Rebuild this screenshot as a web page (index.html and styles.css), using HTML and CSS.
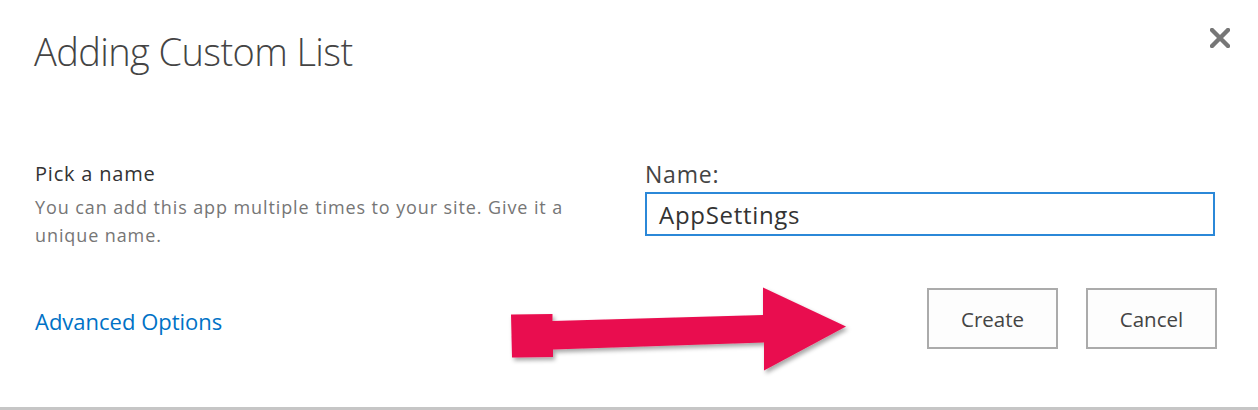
FILE: index.html
```html
<!DOCTYPE html>
<html>
<head>
<meta charset="utf-8">
<link rel="stylesheet" href="styles.css">
</head>
<body>
<div class="dialog">
  <div class="header">
    <h1 class="title">Adding Custom List</h1>
    <button class="close" aria-label="Close">
      <svg width="20" height="20" viewBox="0 0 20 20"><path d="M2 2 L18 18 M18 2 L2 18" stroke="#777" stroke-width="4.4" stroke-linecap="square"/></svg>
    </button>
  </div>
  <div class="content">
    <div class="desc">
      <div class="desc-title">Pick a name</div>
      <div class="desc-text">You can add this app multiple times to your site. Give it a unique name.</div>
    </div>
    <div class="field">
      <label class="field-label">Name:</label>
      <div class="input">AppSettings</div>
    </div>
  </div>
  <div class="footer">
    <a class="adv" href="#">Advanced Options</a>
    <div class="buttons">
      <button class="btn">Create</button>
      <button class="btn">Cancel</button>
    </div>
  </div>
  <svg class="arrow" width="360" height="110" viewBox="500 280 360 110">
    <defs>
      <filter id="sh" x="-10%" y="-20%" width="130%" height="150%">
        <feDropShadow dx="2" dy="3" stdDeviation="2" flood-color="#000" flood-opacity="0.35"/>
      </filter>
    </defs>
    <polygon filter="url(#sh)" fill="#e90e4f" points="511,314.5 552.5,314 552.5,321 763,315 763,287.5 846,326.5 764,370.5 764,342.5 553,349.5 553,357 512,357.5"/>
  </svg>
</div>
</body>
</html>
```
FILE: styles.css
```css
html, body {
  margin: 0;
  padding: 0;
  background: #fff;
}
body {
  font-family: "Open Sans", "Liberation Sans", sans-serif;
  color: #444;
}
.dialog {
  position: relative;
  width: 1258px;
  height: 410px;
  box-sizing: border-box;
  padding: 0 41px 0 35px;
  border-bottom: 3px solid #c6c6c6;
}
.header {
  display: flex;
  justify-content: space-between;
  align-items: flex-start;
  height: 155px;
}
.title {
  margin: 26px 0 0 -1px;
  font-size: 38px;
  font-weight: 300;
  color: #444;
  line-height: 50px;
  letter-spacing: -0.6px;
}
.close {
  margin: 28px -13px 0 0;
  padding: 0;
  border: 0;
  background: none;
  width: 20px;
  height: 20px;
}
.close svg { display: block; }
.content {
  display: grid;
  grid-template-columns: 555px 570px;
  column-gap: 55px;
  height: 133px;
}
.desc-title {
  font-size: 20px;
  letter-spacing: 0.8px;
  color: #333;
  line-height: 28px;
  margin-top: 5px;
}
.desc-text {
  font-size: 18px;
  letter-spacing: 0.9px;
  color: #767676;
  line-height: 28px;
  margin-top: 5px;
}
.field-label {
  display: block;
  font-size: 23px;
  letter-spacing: 0.8px;
  color: #444;
  line-height: 28px;
  margin: 5px 0 0 0;
}
.input {
  margin-top: 4px;
  height: 44px;
  box-sizing: border-box;
  border: 2px solid #2b88d8;
  padding: 2px 12px 0;
  font-size: 24px;
  letter-spacing: 0.7px;
  line-height: 38px;
  color: #333;
}
.footer {
  display: flex;
  justify-content: space-between;
  align-items: flex-start;
  height: 61px;
}
.adv {
  color: #0072c6;
  text-decoration: none;
  font-size: 22px;
  line-height: 30px;
  margin-top: 18px;
}
.buttons {
  display: flex;
  gap: 28px;
}
.btn {
  width: 131px;
  height: 61px;
  box-sizing: border-box;
  border: 2px solid #ababab;
  background: #fdfdfd;
  font-family: "Open Sans", "Liberation Sans", sans-serif;
  font-size: 20.5px;
  color: #444;
  padding: 0;
}
.arrow {
  position: absolute;
  left: 500px;
  top: 280px;
}
```
